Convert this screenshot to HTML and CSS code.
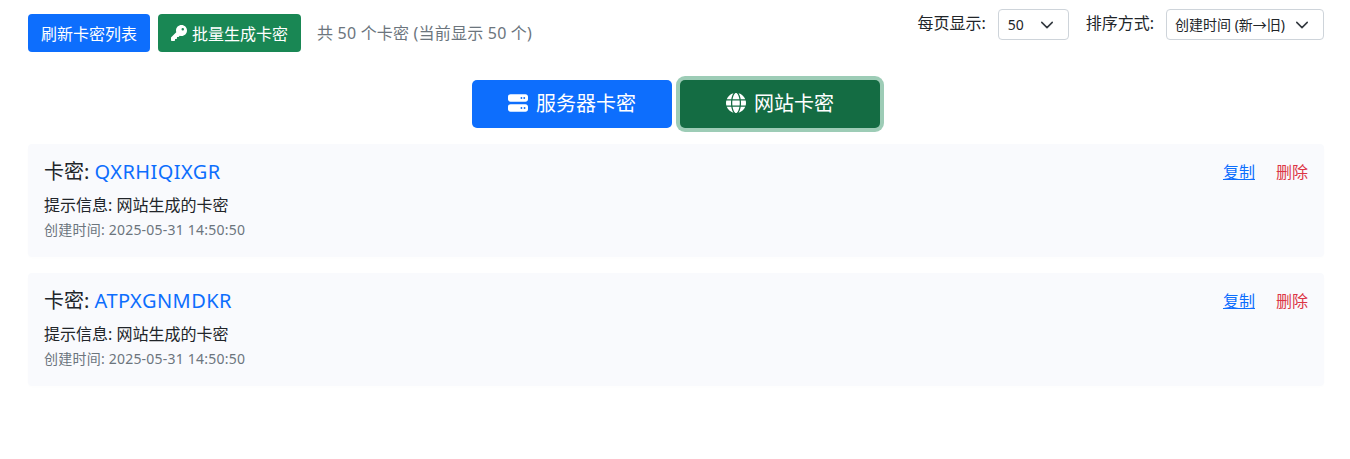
FILE: index.html
```html
<!DOCTYPE html>
<html>
<head>
  <title>卡密管理</title>
  <link rel="stylesheet" href="styles.css">
</head>
<body>
  <div class="toolbar">
    <div class="toolbar-left">
      <button class="btn btn-blue">刷新卡密列表</button>
      <button class="btn btn-green">
        <svg class="key-icon" viewBox="0 0 512 512" fill="currentColor"><path d="M336 352c97.2 0 176-78.8 176-176S433.2 0 336 0S160 78.8 160 176c0 18.7 2.9 36.8 8.3 53.7L7 391c-4.5 4.5-7 10.6-7 17v80c0 13.3 10.7 24 24 24h80c13.3 0 24-10.7 24-24V448h40c13.3 0 24-10.7 24-24V384h40c6.4 0 12.5-2.5 17-7l33.3-33.3c16.9 5.4 35 8.3 53.7 8.3zM376 96a40 40 0 1 1 0 80 40 40 0 1 1 0-80z"/></svg>
        批量生成卡密
      </button>
      <span class="count-text">共 50 个卡密 (当前显示 50 个)</span>
    </div>
    <div class="toolbar-right">
      <label class="select-label">每页显示:</label>
      <select class="select select-size"><option>50</option></select>
      <label class="select-label">排序方式:</label>
      <select class="select select-sort"><option>创建时间 (新→旧)</option></select>
    </div>
  </div>

  <div class="tabs">
    <button class="tab tab-server">
      <svg class="tab-icon" viewBox="0 0 512 512" fill="currentColor"><path d="M64 32C28.7 32 0 60.7 0 96v64c0 35.3 28.7 64 64 64H448c35.3 0 64-28.7 64-64V96c0-35.3-28.7-64-64-64H64zm280 72a24 24 0 1 1 0 48 24 24 0 1 1 0-48zm48 24a24 24 0 1 1 48 0 24 24 0 1 1 -48 0zM64 288c-35.3 0-64 28.7-64 64v64c0 35.3 28.7 64 64 64H448c35.3 0 64-28.7 64-64V352c0-35.3-28.7-64-64-64H64zm280 72a24 24 0 1 1 0 48 24 24 0 1 1 0-48zm56 24a24 24 0 1 1 48 0 24 24 0 1 1 -48 0z"/></svg>
      <span class="tab-text">服务器卡密</span>
    </button>
    <button class="tab tab-site">
      <svg class="tab-icon" viewBox="0 0 512 512" fill="currentColor"><path d="M352 256c0 22.2-1.2 43.6-3.3 64H163.3c-2.2-20.4-3.3-41.8-3.3-64s1.2-43.6 3.3-64H348.7c2.2 20.4 3.3 41.8 3.3 64zm28.8-64H503.9c5.3 20.5 8.1 41.9 8.1 64s-2.8 43.5-8.1 64H380.8c2.1-20.6 3.2-42 3.2-64s-1.1-43.4-3.2-64zm112.6-32H376.7c-10-63.9-29.8-117.4-55.3-151.6c78.3 20.7 142 77.5 171.9 151.6zm-149.1 0H167.7c6.1-36.4 15.5-68.6 27-94.7c10.5-23.6 22.2-40.7 33.5-51.5C239.4 3.2 248.7 0 256 0s16.6 3.2 27.8 13.8c11.3 10.8 23 27.9 33.5 51.5c11.6 26 20.9 58.2 27 94.7zm-209 0H18.6C48.6 85.9 112.2 29.1 190.6 8.4C165.1 42.6 145.3 96.1 135.3 160zM8.1 192H131.2c-2.1 20.6-3.2 42-3.2 64s1.1 43.4 3.2 64H8.1C2.8 299.5 0 278.1 0 256s2.8-43.5 8.1-64zM194.7 446.6c-11.6-26-20.9-58.2-27-94.6H344.3c-6.1 36.4-15.5 68.6-27 94.6c-10.5 23.6-22.2 40.7-33.5 51.5C272.6 508.8 263.3 512 256 512s-16.6-3.2-27.8-13.8c-11.3-10.8-23-27.9-33.5-51.5zM135.3 352c10 63.9 29.8 117.4 55.3 151.6C112.2 482.9 48.6 426.1 18.6 352H135.3zm358.1 0c-30 74.1-93.6 130.9-171.9 151.6c25.5-34.2 45.2-87.7 55.3-151.6H493.4z"/></svg>
      <span class="tab-text">网站卡密</span>
    </button>
  </div>

  <div class="card">
    <div class="card-info">
      <div class="card-title">卡密: <span class="card-code">QXRHIQIXGR</span></div>
      <div class="card-hint">提示信息: 网站生成的卡密</div>
      <div class="card-time">创建时间: 2025-05-31 14:50:50</div>
    </div>
    <div class="card-actions">
      <a class="link-copy" href="#">复制</a>
      <a class="link-delete" href="#">删除</a>
    </div>
  </div>

  <div class="card">
    <div class="card-info">
      <div class="card-title">卡密: <span class="card-code">ATPXGNMDKR</span></div>
      <div class="card-hint">提示信息: 网站生成的卡密</div>
      <div class="card-time">创建时间: 2025-05-31 14:50:50</div>
    </div>
    <div class="card-actions">
      <a class="link-copy" href="#">复制</a>
      <a class="link-delete" href="#">删除</a>
    </div>
  </div>
</body>
</html>
```

FILE: styles.css
```css
body {
  font-family: "Noto Sans", "Noto Sans CJK SC", sans-serif;
  background-color: #fff;
  color: #212529;
  margin: 0;
  padding: 9px 26px 0 28px;
  font-size: 16px;
}

.toolbar {
  display: flex;
  justify-content: space-between;
  align-items: flex-start;
  height: 43px;
}

.toolbar-left {
  display: flex;
  align-items: center;
  gap: 8px;
  margin-top: 5px;
}

.toolbar-right {
  display: flex;
  align-items: center;
}

.btn {
  height: 38px;
  border: none;
  border-radius: 4px;
  color: #fff;
  font-family: inherit;
  font-size: 16px;
  padding: 0 13px;
  display: flex;
  align-items: center;
  gap: 5px;
}

.btn-blue {
  background-color: #0d6efd;
}

.btn-green {
  background-color: #198754;
}

.key-icon {
  width: 16px;
  height: 16px;
}

.count-text {
  color: #6c757d;
  font-size: 16px;
  letter-spacing: 0.2px;
  line-height: 22px;
  margin-left: 8px;
}

.select-label {
  font-size: 16px;
  line-height: 22px;
  margin: 0 12px 4px 0;
}

.select {
  appearance: none;
  height: 31px;
  border: 1px solid #ced4da;
  border-radius: 4px;
  background-color: #fff;
  background-image: url("data:image/svg+xml,%3csvg xmlns='http://www.w3.org/2000/svg' viewBox='0 0 16 16'%3e%3cpath fill='none' stroke='%23343a40' stroke-linecap='round' stroke-linejoin='round' stroke-width='1.8' d='m2 5 6 6 6-6'/%3e%3c/svg%3e");
  background-repeat: no-repeat;
  background-position: right 14px center;
  background-size: 14px 14px;
  color: #212529;
  font-family: inherit;
  font-size: 14px;
}

.select-size {
  width: 71px;
  padding-left: 9px;
  margin-right: 17px;
}

.select-sort {
  width: 158px;
  padding-left: 8px;
}

.tabs {
  display: flex;
  justify-content: center;
  gap: 8px;
  margin: 28px 0 16px;
}

.tab {
  width: 200px;
  height: 48px;
  border: none;
  border-radius: 5px;
  color: #fff;
  font-family: inherit;
  font-size: 20px;
  display: flex;
  align-items: center;
  justify-content: center;
  gap: 8px;
}

.tab-text {
  line-height: 26px;
  margin-bottom: 1px;
}

.tab-server {
  background-color: #0d6efd;
}

.tab-site {
  background-color: #146c43;
  box-shadow: 0 0 0 4px rgba(60, 153, 110, 0.5);
}

.tab-icon {
  width: 20px;
  height: 20px;
  margin-bottom: 2px;
}

.card {
  display: flex;
  justify-content: space-between;
  background-color: #f9fafd;
  border-radius: 4px;
  box-shadow: 0 1px 3px rgba(0, 0, 0, 0.01);
  padding: 16px;
  height: 81px;
  margin-bottom: 16px;
}

.card-title {
  font-size: 20px;
  line-height: 24px;
}

.card-code {
  color: #0d6efd;
  letter-spacing: 0.45px;
}

.card-hint {
  font-size: 16px;
  line-height: 24px;
  margin-top: 9px;
}

.card-time {
  color: #6c757d;
  font-size: 14px;
  letter-spacing: 0.22px;
  line-height: 21px;
  margin-top: 2px;
}

.card-actions {
  display: flex;
  gap: 21px;
  font-size: 16px;
  line-height: 24px;
}

.link-copy {
  color: #0d6efd;
}

.link-delete {
  color: #dc3545;
  text-decoration: none;
}
```
